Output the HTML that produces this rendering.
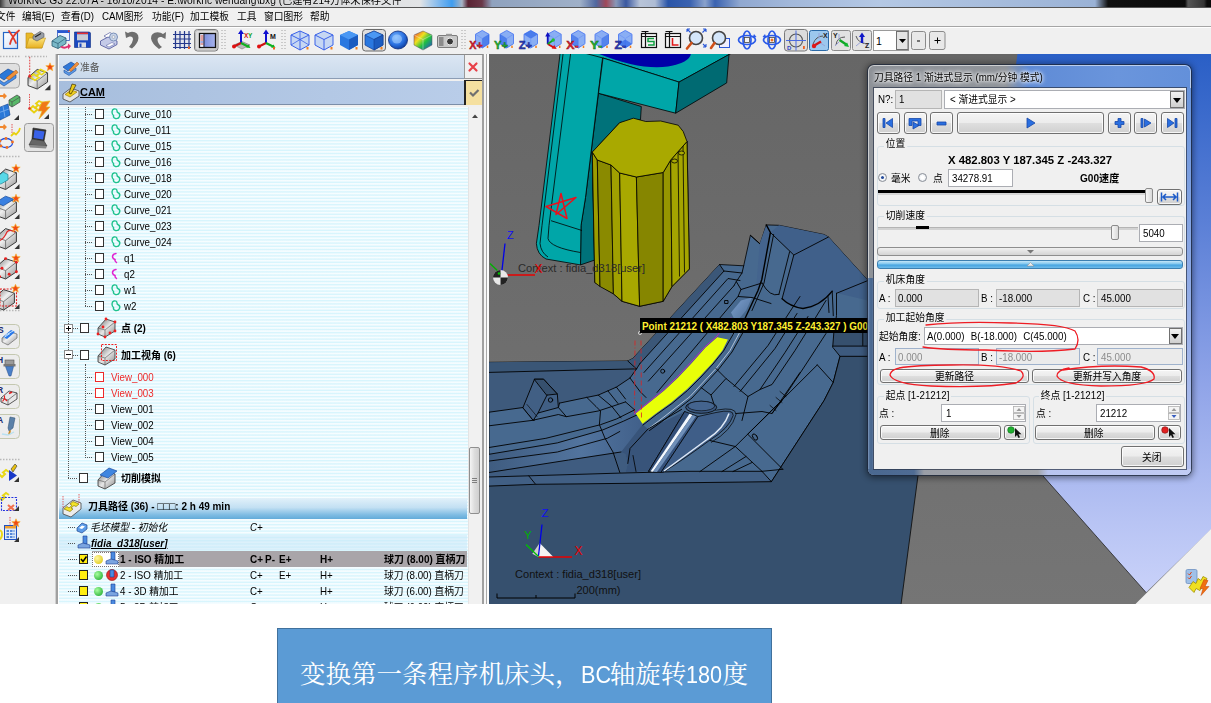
<!DOCTYPE html>
<html lang="zh"><head><meta charset="utf-8"><title>WorkNC</title>
<style>
html,body{margin:0;padding:0;background:#fff;}
body{width:1211px;height:703px;position:relative;overflow:hidden;font-family:"Liberation Sans","Noto Sans CJK SC",sans-serif;font-size:12px;color:#000;}
.a{position:absolute;}
.t{position:absolute;white-space:nowrap;transform-origin:0 50%;transform:scaleX(.93);line-height:14px;font-size:10.5px;}
.b{font-weight:bold;transform:scaleX(.95);}
.i{font-style:italic;}
#ui{position:absolute;left:0;top:0;width:1211px;height:604px;background:#f0f0f0;overflow:hidden;}
#title{position:absolute;left:0;top:0;width:1211px;height:8px;overflow:hidden;}
#menu{position:absolute;left:0;top:8px;width:1211px;height:18px;background:#f0f0f0;}
#menu .t{top:1px;font-size:10.5px;}
#tb{position:absolute;left:0;top:26px;width:1211px;height:28px;background:#f0f0f0;border-top:1px solid #a5a5a5;box-shadow:inset 0 1px 0 #fff;}
#left{position:absolute;left:0;top:54px;width:55px;height:550px;background:#f0f0f0;}
#tree{position:absolute;left:56px;top:54px;width:428px;height:550px;background:#f0f0f0;}
#cap{position:absolute;left:277px;top:628px;width:495px;height:80px;background:#5b9bd5;border:1px solid #41719c;box-sizing:border-box;}
</style></head><body>
<div id="ui">
<div id="title" style="background:linear-gradient(90deg,#3a3a3a 0,#9a9a9a 6px,#c4c4c4 30px,#d4d4d4 200px,#e2e4e6 420px,#7ab6ee 440px,#3f9df0 452px,#a8b4c4 462px,#5a2434 468px,#6a3848 482px,#8fa2be 492px,#9fb0c8 580px,#5068a0 596px,#a04858 606px,#8898b8 616px,#3a58a0 626px,#b8c4d8 640px,#aebcd4 655px,#2a55a8 668px,#3a62b0 690px,#8aa2cc 705px,#3a62b0 715px,#90a8d0 740px,#a2b8da 790px,#b4c8e4 880px,#a6bcdc 1000px,#9ab2d6 1095px,#101010 1108px,#0a0a0a 1185px,#555 1188px,#333 1204px,#0a0a0a 1207px)">
<span class="t" style="left:8px;top:-7.5px;font-size:10.5px;transform:scaleX(.975);color:#000;text-shadow:0 0 2px rgba(255,255,255,.6);filter:blur(.4px)">WorkNC G3 22.07A - 16/10/2014 - E:\worknc wendang\bxg (已建有214方体未保存文件</span>
<div class="a" style="left:0;top:6.500px;width:1211px;height:1.500px;background:#555"></div>
</div>
<div id="menu">
<span class="t" style="left:-4px">文件</span>
<span class="t" style="left:22px">编辑(E)</span>
<span class="t" style="left:61px">查看(D)</span>
<span class="t" style="left:102px">CAM图形</span>
<span class="t" style="left:152px">功能(F)</span>
<span class="t" style="left:190px">加工模板</span>
<span class="t" style="left:237px">工具</span>
<span class="t" style="left:264px">窗口图形</span>
<span class="t" style="left:310px">帮助</span>
</div>
<div id="tb"></div>
<svg class="a" style="left:0;top:27px" width="960" height="27" viewBox="0 27 960 27">
<defs>
<linearGradient id="tdoc" x1="0" y1="0" x2="1" y2="1"><stop offset="0" stop-color="#fff"/><stop offset="1" stop-color="#cfe0f8"/></linearGradient>
<linearGradient id="tfold" x1="0" y1="0" x2="0" y2="1"><stop offset="0" stop-color="#fbe480"/><stop offset="1" stop-color="#e8b020"/></linearGradient>
<linearGradient id="tcube" x1="0" y1="0" x2="1" y2="1"><stop offset="0" stop-color="#4a9af0"/><stop offset="1" stop-color="#1c62c8"/></linearGradient>
<linearGradient id="tpan" x1="0" y1="0" x2="1" y2="0"><stop offset="0" stop-color="#6a80d8"/><stop offset="1" stop-color="#a8b4ec"/></linearGradient>
<radialGradient id="tsph" cx=".4" cy=".35" r=".7"><stop offset="0" stop-color="#7ab8ff"/><stop offset=".6" stop-color="#2a70e0"/><stop offset="1" stop-color="#0c3a98"/></radialGradient>
<linearGradient id="trb" x1="0" y1="0" x2="1" y2="1"><stop offset="0" stop-color="#f03030"/><stop offset=".35" stop-color="#f0e020"/><stop offset=".6" stop-color="#20c040"/><stop offset="1" stop-color="#2040e0"/></linearGradient>
<g id="wc"><path d="M11,2 L20,6 L20,16 L11,21 L2,16 L2,6 Z" fill="rgba(120,170,250,.35)" stroke="#3a62e8" stroke-width="1"/><path d="M2,6 L11,10.500 L20,6 M11,10.500 V21" fill="none" stroke="#3a62e8" stroke-width="1"/></g>
<g id="vc"><path d="M11,1.500 L20,5.500 L20,15.500 L11,20 L2,15.500 L2,5.500 Z" fill="rgba(70,130,245,.6)" stroke="#3a6af0" stroke-width=".9"/><path d="M2,5.500 L11,10 L20,5.500 M11,10 V20" fill="none" stroke="#6a92f4" stroke-width=".8"/><path d="M11,1.500 V10 M2,15.500 L11,10 L20,15.500" fill="none" stroke="#8ab0f8" stroke-width=".5"/><rect x="17" y="17.500" width="2" height="2.500" fill="#f08020"/></g>
<g id="sep"><path d="M1,2 v1 M1,5 v1 M1,8 v1 M1,11 v1 M1,14 v1 M1,17 v1 M1,20 v1 M4,2 v1 M4,5 v1 M4,8 v1 M4,11 v1 M4,14 v1 M4,17 v1 M4,20 v1" stroke="#b4b4b4" stroke-width="1.300"/></g>
</defs>
<!-- 1 new doc with red X -->
<rect x="3.500" y="32.500" width="14" height="16" fill="url(#tdoc)" stroke="#2565c5" stroke-width="1.200"/>
<path d="M9,31 Q13,36 16,43 M19,30.500 Q12,36 10,44" fill="none" stroke="#e03a2a" stroke-width="1.800" stroke-linecap="round"/>
<!-- 2 folder -->
<path d="M26,33 h6 l2,2 h8 v13 h-16 z" fill="#e8b828" stroke="#b88810" stroke-width=".6"/>
<path d="M26,48 L29,38 H45.500 L42,48 Z" fill="url(#tfold)" stroke="#c09010" stroke-width=".6"/>
<path d="M33,36 L40,31.500 L44,33.500 L44,37 L37,41 L33,39 Z" fill="#9aa0a8" stroke="#50545a" stroke-width=".6"/><path d="M35,37 l6,-3.500" stroke="#222" stroke-width="1.200"/>
<!-- 3 teal box w/ window -->
<rect x="57.500" y="30.500" width="12" height="10" fill="#e8f0ff" stroke="#3058c0" stroke-width=".8"/><rect x="57.500" y="30.500" width="12" height="2.500" fill="#2858d0"/><rect x="68" y="30.500" width="1.500" height="1.500" fill="#e03030"/>
<path d="M52,41 L60,35.500 L66,38 L66,43.500 L58,48.500 L52,46 Z" fill="#7ab8c8" stroke="#2a5a70" stroke-width=".8"/><path d="M52,41 L58,43.500 L66,38 M58,43.500 V48.500" fill="none" stroke="#2a5a70" stroke-width=".7"/>
<path d="M60,47 Q64,50 68,47.500 v2 l3,-3.500 l-3,-2.500 v2 Q65,47.500 62,46 Z" fill="#e03070"/>
<!-- 4 floppy -->
<path d="M74.500,32 h15 l1,1 v14.500 h-16 z" fill="#1a48c0" stroke="#0a2a80" stroke-width=".6"/><rect x="77" y="32.500" width="11" height="1.800" fill="#e83030"/><rect x="77" y="34.300" width="11" height="6" fill="#c8ccd4"/><rect x="78" y="42.500" width="8" height="5" fill="#d8dce4"/><rect x="79.500" y="43.500" width="2" height="3.500" fill="#1a48c0"/>
<!-- 5 printer -->
<path d="M104,36 L110,32.500 L114,35 L108,38.500 Z" fill="#fff" stroke="#5a62a0" stroke-width=".7"/>
<path d="M100.500,41 L108,37 L117,41 L117,44.500 L109,49 L100.500,45 Z" fill="#c4cae8" stroke="#4a5298" stroke-width=".8"/><path d="M106,45.500 L112,42.500 L115,44 L109,47 Z" fill="#fff" stroke="#4a5298" stroke-width=".5"/>
<circle cx="113.500" cy="37" r="4" fill="#c8d4e8" stroke="#7a90b8" stroke-width="1"/><circle cx="113.500" cy="37" r="1.500" fill="#f0f0f0" stroke="#8a98b0" stroke-width=".6"/>
<!-- 6 undo / 7 redo -->
<path d="M125,31.500 L126,38 L129.500,36.500 Q133,36 133,39.500 Q132.500,43.500 129,47 L132,48.500 Q138,43.500 138.500,38 Q138.500,32 132,31.800 Q129,32 128,33 Z" fill="#6e6e6e"/>
<path d="M166,32 L165.500,39 L161.500,37 Q157.500,36.500 157.500,40 Q158,44 162,47 L159,49 Q152,44 151,38.500 Q151,32.500 157.500,32.300 Q161,32.500 163,34 Z" fill="#6e6e6e"/>
<!-- 8 grid -->
<rect x="174" y="32" width="16" height="16" fill="#e4e6ee"/>
<path d="M173,34.500 h18 M173,39 h18 M173,43.500 h18 M173,47.500 h18 M175.500,31 v18 M180,31 v18 M184.500,31 v18 M189,31 v18" stroke="#24388c" stroke-width="1.200"/><rect x="188" y="46.500" width="1.800" height="2.500" fill="#f06020"/>
<!-- 9 pressed panel -->
<rect x="194.500" y="29.500" width="23.500" height="21.500" rx="3" fill="#dcdcdc" stroke="#7c7c7c" stroke-width="1"/><rect x="195.500" y="30.500" width="21.500" height="19.500" rx="2" fill="none" stroke="#bcbcbc" stroke-width="1"/>
<rect x="199.500" y="33.500" width="16" height="14" fill="url(#tpan)" stroke="#111" stroke-width="1.300"/><rect x="200.200" y="34.200" width="3.300" height="12.600" fill="#f4f4f4"/><path d="M200.500,36 h3 M200.500,38 h3 M200.500,40 h3 M200.500,44 h3" stroke="#c02020" stroke-width=".8"/><path d="M200.500,42 h3" stroke="#2040c0" stroke-width=".8"/><path d="M204,34 v13" stroke="#111" stroke-width=".8"/>
<use href="#sep" x="221" y="28"/>
<!-- 11 axes XY -->
<g transform="translate(231,29)"><path d="M3,16 L11,12.500 L19,16 L11,20 Z" fill="#b8b8b8" stroke="#777" stroke-width=".6"/><path d="M10,14 V4" stroke="#1010d0" stroke-width="2"/><path d="M10,0.500 L7,5 H13 Z" fill="#1010d0"/><path d="M10,14 L3,17.500" stroke="#d01010" stroke-width="2"/><circle cx="3" cy="17.500" r="2" fill="#e01010"/><path d="M10,14 L17,17.500" stroke="#10b020" stroke-width="2"/><path d="M19.500,19 L15,18.500 L17.500,15.500 Z" fill="#10b020"/><text x="13" y="9" font-family="Liberation Sans,sans-serif" font-weight="bold" font-size="6.500" fill="#d01010">X</text><text x="17" y="9" font-family="Liberation Sans,sans-serif" font-weight="bold" font-size="6.500" fill="#10a020">Y</text></g>
<g transform="translate(256,29)"><path d="M10,14 V4" stroke="#1010d0" stroke-width="2"/><path d="M10,0.500 L7,5 H13 Z" fill="#1010d0"/><path d="M10,14 L3,17.500" stroke="#d01010" stroke-width="2"/><circle cx="3" cy="17.500" r="2" fill="#e01010"/><path d="M10,14 L17,17.500" stroke="#10b020" stroke-width="2"/><path d="M19.500,19 L15,18.500 L17.500,15.500 Z" fill="#10b020"/><text x="14" y="9.500" font-family="Liberation Sans,sans-serif" font-weight="bold" font-size="7" fill="#111">M</text><rect x="17" y="18" width="2" height="2.500" fill="#f06020"/></g>
<use href="#sep" x="281" y="28"/>
<!-- cubes -->
<g transform="translate(289,29)"><use href="#wc"/><path d="M2,16 L11,10.500 L20,16 M11,2 V10.500" fill="none" stroke="#3a62e8" stroke-width=".8"/><rect x="17.500" y="18" width="2" height="2.500" fill="#f08020"/></g>
<g transform="translate(313,29)"><use href="#wc"/><rect x="17.500" y="18" width="2" height="2.500" fill="#f08020"/></g>
<g transform="translate(338,29)"><path d="M11,2 L20,6 L20,16 L11,21 L2,16 L2,6 Z" fill="#2a78e0"/><path d="M11,2 L20,6 L11,10.500 L2,6 Z" fill="#4a98f4"/><path d="M11,10.500 L20,6 L20,16 L11,21 Z" fill="#1c5cc0"/><rect x="17.500" y="18" width="2" height="2.500" fill="#f08020"/></g>
<rect x="362.500" y="29.500" width="23" height="21.500" rx="3" fill="#dedede" stroke="#6a6a6a" stroke-width="1"/>
<g transform="translate(363,29)"><path d="M11,2 L20,6 L20,16 L11,21 L2,16 L2,6 Z" fill="#2a78e0" stroke="#123c90" stroke-width=".7"/><path d="M11,2 L20,6 L11,10.500 L2,6 Z" fill="#4a98f4" stroke="#123c90" stroke-width=".6"/><path d="M11,10.500 L20,6 L20,16 L11,21 Z" fill="#1c5cc0" stroke="#123c90" stroke-width=".6"/><rect x="17.500" y="18" width="2" height="2.500" fill="#f08020"/></g>
<ellipse cx="398" cy="40" rx="9.500" ry="9" fill="url(#tsph)" stroke="#0c2a78" stroke-width=".8"/><ellipse cx="397" cy="39" rx="5" ry="4.500" fill="rgba(170,210,255,.55)"/>
<g transform="translate(412,29)"><path d="M11,2 L20,6 L20,16 L11,21 L2,16 L2,6 Z" fill="url(#trb)" stroke="#555" stroke-width=".5"/><path d="M2,6 L11,10.500 L20,6 M11,10.500 V21" fill="none" stroke="rgba(255,255,255,.5)" stroke-width=".7"/></g>
<g transform="translate(437,33)"><rect x=".5" y="2.500" width="20" height="12" rx="1.500" fill="#c8c8c8" stroke="#707070" stroke-width=".9"/><rect x="2" y="4" width="4.500" height="9" fill="#8c8c8c"/><circle cx="13" cy="8.500" r="3.500" fill="#3a3a3a" stroke="#eee" stroke-width="1"/><rect x="9" y=".8" width="6" height="2" fill="#9a9a9a"/></g>
<use href="#sep" x="461" y="28"/>
<!-- view cubes -->
<g font-family="Liberation Sans,sans-serif" font-weight="bold" font-size="10" stroke-width=".4">
<g transform="translate(474.0,29) scale(.75,.95)"><use href="#vc"/><path d="M11,10 L20,5.500 L20,15.500 L11,20 Z" fill="rgba(30,90,230,.55)"/></g>
<text x="469.3" y="49" fill="#e02030" stroke="#801018" textLength="13.5" lengthAdjust="spacingAndGlyphs">X+</text>
<g transform="translate(498.5,29) scale(.75,.95)"><use href="#vc"/><path d="M11,10 L2,5.500 L2,15.500 L11,20 Z" fill="rgba(30,90,230,.55)"/></g>
<text x="494" y="49" fill="#20b830" stroke="#106018" textLength="14" lengthAdjust="spacingAndGlyphs">Y+</text>
<g transform="translate(522.5,29) scale(.75,.95)"><use href="#vc"/><path d="M11,1.500 L20,5.500 L11,10 L2,5.500 Z" fill="rgba(30,90,230,.6)"/></g>
<text x="518.8" y="49" fill="#3040c0" stroke="#101870" textLength="13.2" lengthAdjust="spacingAndGlyphs">Z+</text>
<g transform="translate(546.2,29) scale(.75,.95)"><use href="#vc"/></g>
<g transform="translate(543.7,29)"><path d="M4,6 V15" stroke="#1010c0" stroke-width="1.800"/><path d="M4,3 L1.500,7.500 H6.500 Z" fill="#1010c0" stroke="none"/><path d="M4,15 L10,18.500" stroke="#d01010" stroke-width="2"/><path d="M13,20 L8,19.500 L10.500,16 Z" fill="#e01010" stroke="none"/><path d="M4,15 L9,11.500" stroke="#10a020" stroke-width="1.600"/><circle cx="9.500" cy="11" r="1.700" fill="#20c030" stroke="none"/></g>
<g transform="translate(570.0,29) scale(.75,.95)"><use href="#vc"/><path d="M2,5.500 L11,10 L11,20 L2,15.500 Z" fill="rgba(30,90,230,.5)"/></g>
<text x="566.3" y="49" fill="#e02030" stroke="#801018" textLength="12.4" lengthAdjust="spacingAndGlyphs">X-</text>
<g transform="translate(593.5,29) scale(.75,.95)"><use href="#vc"/><path d="M11,10 L20,5.500 L20,15.500 L11,20 Z" fill="rgba(30,90,230,.5)"/></g>
<text x="590" y="49" fill="#20b830" stroke="#106018" textLength="12.4" lengthAdjust="spacingAndGlyphs">Y-</text>
<g transform="translate(617.0,29) scale(.75,.95)"><use href="#vc"/><path d="M2,15.500 L11,11 L20,15.500 L11,20 Z" fill="rgba(30,90,230,.6)"/></g>
<text x="614.5" y="49" fill="#3040c0" stroke="#101870" textLength="11.5" lengthAdjust="spacingAndGlyphs">Z-</text>
</g>
<!-- S / L tables -->
<g transform="translate(640,30)"><rect x="1.500" y="3.500" width="15" height="14" fill="#f4f4f4" stroke="#111" stroke-width="1.200"/><path d="M1.500,6.500 h15 M5.500,1 v16.500 M1.500,1.500 h7" stroke="#111" stroke-width="1.200" fill="none"/><path d="M14,8.500 h-6 v3 h6 v3.500 h-6" fill="none" stroke="#10a040" stroke-width="1.500"/></g>
<g transform="translate(664,30)"><rect x="1.500" y="3.500" width="15" height="14" fill="#f4f4f4" stroke="#111" stroke-width="1.200"/><path d="M1.500,6.500 h15 M5.500,1 v16.500 M1.500,1.500 h7" stroke="#111" stroke-width="1.200" fill="none"/><path d="M8.500,8 v7 h6" fill="none" stroke="#e01818" stroke-width="1.600"/></g>
<!-- zoom fit -->
<g transform="translate(686,28)"><circle cx="10" cy="10" r="6.500" fill="#d4e6fa" stroke="#444" stroke-width="1.600"/><path d="M5.500,15 L1,20.500" stroke="#d05018" stroke-width="2.600" stroke-linecap="round"/><path d="M1,1 l3.500,3.500 M1,1 h3 M1,1 v3 M20,1 l-3.500,3.500 M20,1 h-3 M20,1 v3 M20,19 l-3,-3 M20,19 h-3 M20,19 v-3" stroke="#2a58d8" stroke-width="1.100" fill="none"/></g>
<g transform="translate(710,29)"><rect x="9.500" y="9.500" width="10" height="9" fill="#eef" stroke="#2a58d8" stroke-width="1"/><circle cx="9" cy="9" r="6.500" fill="#d4e6fa" stroke="#444" stroke-width="1.600"/><path d="M4.500,14 L1,19" stroke="#d05018" stroke-width="2.600" stroke-linecap="round"/></g>
<!-- rotate icons -->
<g transform="translate(737,29)" fill="none" stroke="#2a5ae8" stroke-width="1.700"><ellipse cx="10" cy="11" rx="8.500" ry="4.500"/><ellipse cx="10" cy="11" rx="4" ry="9"/><rect x="7.500" y="8.500" width="5" height="5" fill="#f4f4f4" stroke="#444" stroke-width=".8"/><path d="M17,5 l2.500,3 l-4,.8 z" fill="#2a5ae8" stroke="none"/></g>
<g transform="translate(762,29)" fill="none" stroke="#2a5ae8" stroke-width="1.700"><ellipse cx="10" cy="11" rx="8.500" ry="4.500"/><ellipse cx="10" cy="11" rx="4" ry="9"/><rect x="7.500" y="8.500" width="5" height="5" fill="#f4f4f4" stroke="#444" stroke-width=".8"/><circle cx="10" cy="11" r="1.500" fill="#f07020" stroke="none"/><path d="M3,5 l-2.500,3 l4,.8 z" fill="#2a5ae8" stroke="none"/></g>
<!-- pressed crosshair -->
<rect x="784.500" y="29.500" width="23" height="21.500" rx="3" fill="#dcdcdc" stroke="#7a7a7a" stroke-width="1"/>
<circle cx="796" cy="40.500" r="6.500" fill="none" stroke="#555" stroke-width="1.100"/><path d="M796,30.500 v20 M786,40.500 h20" stroke="#4a6ae0" stroke-width="1"/><text x="787" y="49.500" font-family="Liberation Sans,sans-serif" font-size="6" font-weight="bold" fill="#3040c0">D</text><rect x="803" y="46" width="1.800" height="3" fill="#f06020"/>
<rect x="809.500" y="30.500" width="19" height="20" rx="2" fill="#9cc8ee" stroke="#2a6aa8" stroke-width="1"/>
<g transform="translate(810,31)"><path d="M3,13 Q6,5 13,5" fill="none" stroke="#555" stroke-width="1"/><path d="M9,8 V2 M9,11 L15,15" stroke="#9aa4d8" stroke-width="1"/><path d="M3.500,15 L11,10.500" stroke="#d01818" stroke-width="2.400"/><circle cx="4" cy="15" r="2.200" fill="#e01818"/><text x="13" y="7" font-family="Liberation Sans,sans-serif" font-size="7" font-weight="bold" fill="#222">X</text></g>
<rect x="831.500" y="30.500" width="19" height="20" rx="2" fill="#e2e2e2" stroke="#8a8a8a" stroke-width="1"/>
<g transform="translate(832,31)"><path d="M4,14 Q5,6 13,6" fill="none" stroke="#555" stroke-width="1"/><path d="M7,9 V3 M7,11 L3,15" stroke="#9aa4d8" stroke-width="1"/><path d="M7.500,9 L15,14" stroke="#10a828" stroke-width="2.400"/><path d="M17,16 L12,15 L15,11.500 Z" fill="#10b830"/><text x="1" y="7" font-family="Liberation Sans,sans-serif" font-size="7" font-weight="bold" fill="#222">Y</text></g>
<rect x="852.500" y="30.500" width="19" height="20" rx="2" fill="#e2e2e2" stroke="#8a8a8a" stroke-width="1"/>
<g transform="translate(853,31)"><path d="M3,5 Q5,12 14,13" fill="none" stroke="#555" stroke-width="1"/><path d="M9,10 L3,15 M9,10 L15,15" stroke="#9aa4d8" stroke-width="1"/><path d="M9,12 V5" stroke="#1018c8" stroke-width="2.400"/><path d="M9,1.500 L6,6 H12 Z" fill="#1018c8"/><text x="12" y="17" font-family="Liberation Sans,sans-serif" font-size="7" font-weight="bold" fill="#222">Z</text></g>
<!-- combo + buttons -->
<rect x="873.500" y="30.500" width="35" height="20" fill="#fff" stroke="#9a9a9a" stroke-width="1"/>
<text x="876" y="44.500" font-family="Liberation Sans,sans-serif" font-size="10.500" fill="#000">1</text>
<rect x="896.500" y="31.500" width="11.500" height="18" fill="#e4e4e4" stroke="#707070" stroke-width="1"/><path d="M899,39 h7 l-3.500,4 z" fill="#000"/>
<rect x="911.500" y="31.500" width="14" height="18" rx="2" fill="#e8e8e8" stroke="#8a8a8a" stroke-width="1"/><path d="M917,41 h3" stroke="#000" stroke-width="1"/>
<rect x="929.500" y="31.500" width="15.500" height="18" rx="2" fill="#e8e8e8" stroke="#8a8a8a" stroke-width="1"/><path d="M934.500,40.500 h6 M937.500,37.500 v6" stroke="#000" stroke-width="1"/>
</svg>
<svg class="a" style="left:0;top:54px" width="56" height="550" viewBox="0 54 56 550">
<defs>
<linearGradient id="lblk" x1="0" y1="0" x2="1" y2="1"><stop offset="0" stop-color="#707070"/><stop offset=".45" stop-color="#efefef"/><stop offset="1" stop-color="#8c8c8c"/></linearGradient>
<g id="lb"><path d="M0,10 L8,3 L17,6 L17,14 L8,20 L0,17 Z" fill="url(#lblk)" stroke="#333" stroke-width=".8"/><path d="M0,10 L8,13 L17,6 M8,13 V20" fill="none" stroke="#555" stroke-width=".6"/></g>
<g id="star"><path d="M0,-4.200 L1.200,-1.400 L4.200,-1.300 L1.900,.6 L2.700,3.700 L0,2 L-2.700,3.700 L-1.900,.6 L-4.200,-1.300 L-1.200,-1.400 Z" fill="#f04a14" stroke="#f8b838" stroke-width=".7"/></g>
<g id="tri"><path d="M0,5 L5,5 L5,0 Z" fill="#333"/></g>
</defs>
<rect x="0" y="54" width="55" height="550" fill="#f0f0f0"/>
<rect x="55" y="54" width="1" height="550" fill="#d0d0d0"/>
<path d="M0,56.500 h20 M25,56.500 h22 M0,156.500 h20 M0,310.500 h20 M0,459.500 h20" stroke="#b8b8b8" stroke-width="1.300" stroke-dasharray="1.500 1.500"/>
<!-- row1 left pressed -->
<rect x="-4" y="63.500" width="23.500" height="24.500" rx="4" fill="#e0e0e0" stroke="#a8a8a8" stroke-width="1"/>
<path d="M-2,76 L8,69 L14,72 L4,80 Z" fill="#2a78d8" stroke="#184a98" stroke-width=".7"/><path d="M-2,79 L4,83 L16,75 L16,78 L4,86 L-2,82 Z" fill="#4a90e8" stroke="#184a98" stroke-width=".6"/><path d="M6,78 L16,70 L18,72.500 L9,80 Z" fill="#f09038" stroke="#a05010" stroke-width=".5"/>
<!-- row1 right -->
<g transform="translate(28,66) scale(1.15)"><use href="#lb"/><path d="M2,9.500 L5,7 L7,8.500 L10,6 L8,5 L11,3 L15,5 L12,7.500 L10,6.500 L7.500,9 L9.500,10 L6,12.500 Z" fill="none" stroke="#e8d818" stroke-width="1.400"/><path d="M1.500,-8 v16" stroke="#e03030" stroke-width=".8" stroke-dasharray="1.500 1"/><circle cx="1.500" cy="9" r="1.300" fill="#e03030"/><use href="#tri" x="14.500" y="16"/></g><use href="#star" x="50" y="67"/>
<!-- row2 left -->
<path d="M0,95 l3,0 l1,-2 l3,3 l-3,3 l-1,-2 l-3,0 z" fill="#f08830"/>
<path d="M9,100 L17,95 L20,97 L20,102 L12,107 L9,105 Z" fill="#58b868" stroke="#444" stroke-width=".7"/><path d="M9,100 L12,102 L20,97 M12,102 v5" fill="none" stroke="#444" stroke-width=".6"/>
<path d="M-2,108 L8,104 L10,115 L0,120 Z" fill="#2a78d8" stroke="#184a98" stroke-width=".7"/><path d="M3,106 l2,11 M-2,113 l11,-4" stroke="#8ab8f0" stroke-width=".7"/><use href="#tri" x="14" y="115"/>
<!-- row2 right -->
<g transform="translate(28,97)"><path d="M2,12 L5,9 L7,11 L10,8 L8,6.500 L11,4 L15,6 L12,9 L10,8 L7.500,11 L9.500,12.500 L6,15.500 Z" fill="none" stroke="#e8d010" stroke-width="1.800"/><path d="M1.500,-3 v14" stroke="#e03030" stroke-width=".8" stroke-dasharray="1.500 1"/><circle cx="1.500" cy="11.500" r="1.300" fill="#e03030"/><path d="M14,5 L22,4 L18,10 L22,10 L11,22 L14,14 L10,14 Z" fill="#f07818" stroke="#e8c020" stroke-width=".7"/><use href="#tri" x="16" y="17"/></g>
<!-- row3 left -->
<path d="M0,126 l3,0 l1,-2 l3,3 l-3,3 l-1,-2 l-3,0 z" fill="#f08830"/>
<path d="M12,124 v10" stroke="#e03030" stroke-width=".8" stroke-dasharray="1.500 1"/><path d="M11,136 L14,133 L16,134.500 L19,131 L20,128" fill="none" stroke="#e8d010" stroke-width="1.800"/>
<ellipse cx="6" cy="143" rx="6.500" ry="4.500" fill="none" stroke="#2050e0" stroke-width="1.300"/><g fill="#f07020"><circle cx="0" cy="141" r="1.400"/><circle cx="6" cy="138.500" r="1.400"/><circle cx="12.500" cy="142" r="1.400"/><circle cx="7" cy="147.500" r="1.400"/><circle cx="1" cy="146" r="1.400"/></g>
<!-- row3 right pressed laptop -->
<rect x="24.500" y="123.500" width="29" height="28" rx="3" fill="#e4e4e4" stroke="#9a9a9a" stroke-width="1"/>
<path d="M33,128 L46,130 L44,141 L32,139 Z" fill="#333" stroke="#222" stroke-width=".6"/><path d="M34.500,130 L44.500,131.500 L43,139.500 L33.500,138 Z" fill="#3a62e8"/><path d="M32,139 L44,141 L47,146 L29,145 Z" fill="#666" stroke="#333" stroke-width=".6"/><path d="M29,145 L47,146 L46,148.500 L30,147.500 Z" fill="#888"/>
<!-- column icons -->
<g transform="translate(-4,165.500) scale(1.2)"><use href="#lb"/><path d="M0,10 L6,5.500 L10,7.500 L10,12 L4,15.500 L0,13.500 Z" fill="#58d8e8" stroke="#208090" stroke-width=".6"/></g>
<g transform="translate(-4,195) scale(1.2)"><use href="#lb"/><path d="M0,6 L8,1 L15,3.500 L6,9 Z" fill="#3a80e0" stroke="#184a98" stroke-width=".6"/></g>
<g transform="translate(-4,225) scale(1.2)"><use href="#lb"/><path d="M0,14 Q6,13 9,6 Q11,3 16,6" fill="none" stroke="#e02828" stroke-width="1"/></g>
<g transform="translate(-4,255) scale(1.2)"><use href="#lb"/><g fill="#e82020"><circle cx="8" cy="3" r="1.200"/><circle cx="17" cy="6" r="1.200"/><circle cx="5" cy="11" r="1.200"/><circle cx="11" cy="16" r="1.200"/><circle cx="3" cy="18" r="1.200"/><circle cx="17" cy="14" r="1.200"/></g></g>
<g transform="translate(-6,286) scale(1.2)"><use href="#lb"/></g><rect x="0" y="289" width="16.500" height="17" fill="none" stroke="#e82020" stroke-width="1.100" stroke-dasharray="2 1.300"/>
<use href="#star" x="16" y="168.500"/><use href="#star" x="16" y="198.500"/><use href="#star" x="15.500" y="228"/><use href="#star" x="16" y="258"/><use href="#star" x="15.500" y="288.500"/>
<use href="#tri" x="14.500" y="184"/><use href="#tri" x="14.500" y="214"/><use href="#tri" x="14.500" y="244"/><use href="#tri" x="14.500" y="274"/><use href="#tri" x="14.500" y="304"/>
<!-- S H R A -->
<g font-family="Liberation Sans,sans-serif" font-weight="bold" font-size="8.500" fill="#1a2a70">
<g transform="translate(0,324)"><rect x="-4" y=".5" width="23.500" height="24" rx="4" fill="#ececec" stroke="#c4c8b0" stroke-width="1"/><path d="M2,14 L10,8 L17,10 L17,14 L8,21 L2,18 Z" fill="url(#lblk)" stroke="#555" stroke-width=".6"/><path d="M3,13 L11,6 L15,8 L7,15 Z" fill="#2a78e8"/><path d="M5,11.500 L13,7 M4,13.500 L10,9.500" stroke="#bfe0ff" stroke-width="1"/><text x="-2" y="9">S</text></g>
<g transform="translate(0,354)"><rect x="-4" y=".5" width="23.500" height="24" rx="4" fill="#ececec" stroke="#c4c8b0" stroke-width="1"/><rect x="5" y="6" width="9" height="5" fill="#9a9a9a" stroke="#555" stroke-width=".6"/><rect x="3.500" y="10" width="12" height="2.500" fill="#777"/><path d="M5.500,12.500 h8 l-2.500,9.500 h-2 z" fill="#4a80c8" stroke="#234a88" stroke-width=".5"/><text x="-3" y="9">H</text></g>
<g transform="translate(0,384)"><rect x="-4" y=".5" width="23.500" height="24" rx="4" fill="#ececec" stroke="#c4c8b0" stroke-width="1"/><path d="M1,14 L9,7 L17,9 L17,15 L8,21 L1,18 Z" fill="#e8e8e8" stroke="#333" stroke-width=".8"/><path d="M1,14 L8,16 L17,9 M8,16 v5" fill="none" stroke="#333" stroke-width=".6"/><path d="M9,9.500 l3,-1.500" stroke="#e02020" stroke-width="1.800"/><path d="M4.500,14.500 l-2,3 M4.500,14.500 l2.500,2.500 M4.500,14.500 v-3" stroke="#e02020" stroke-width="1.100"/><text x="-3" y="9">R</text></g>
<g transform="translate(0,414)"><rect x="-4" y=".5" width="23.500" height="24" rx="4" fill="#ececec" stroke="#c4c8b0" stroke-width="1"/><path d="M10,3 L15,4 L13,14 L9,17 L8,14 Z" fill="#5a80a8" stroke="#2a4a70" stroke-width=".5"/><path d="M9,17 L8,21 L10,21 L11,16 Z" fill="#c88820"/><path d="M2,20 L8,21 L14,18" stroke="#b8e0f0" stroke-width="1.300" fill="none"/><text x="-3" y="9">A</text></g>
</g>
<!-- bottom 3 -->
<g transform="translate(0,466)"><path d="M-3,12 L0,9 L2,11 L5,8 L3,6.500 L6,4 L9,6" fill="none" stroke="#e8d818" stroke-width="2"/><path d="M11,3 L15,-2 L17,0 L13,6 Z" fill="#e8c010" stroke="#333" stroke-width=".6"/><path d="M9,4 L17,9.500 L9,15 Z" fill="#1838c8"/><use href="#tri" x="14" y="11"/></g>
<g transform="translate(0,494)"><path d="M-3,7 L0,4 L2,6 L5,3 L3,1.500 L6,-1 L9,1" fill="none" stroke="#e8d818" stroke-width="2"/><rect x="1.500" y="3.500" width="15" height="13" fill="none" stroke="#2030e0" stroke-width="1.100" stroke-dasharray="2 1.300"/><path d="M8,11 l6,5 M14,11 l-6,5" stroke="#f07050" stroke-width="2.200"/><use href="#tri" x="14" y="12"/></g>
<g transform="translate(0,522)"><path d="M-3,9 Q2,7 2,12 Q2,17 -2,18" fill="none" stroke="#e8d818" stroke-width="2"/><path d="M10,-5 v8" stroke="#e03030" stroke-width=".8" stroke-dasharray="1.500 1"/><rect x="4.500" y="3.500" width="12" height="14" fill="#dce8f8" stroke="#2050c0" stroke-width="1"/><rect x="5" y="4" width="11" height="2.500" fill="#f0a030"/><path d="M6.500,9 h8 M6.500,12 h8 M6.500,15 h8" stroke="#2a68d0" stroke-width="1.600" stroke-dasharray="2.500 1"/><use href="#star" x="16" y="1"/><use href="#tri" x="14" y="15"/></g>
</svg>
<style>
#tr .t{font-size:10.5px}
.cb{position:absolute;width:9px;height:10px;box-sizing:border-box;border:1.3px solid #333;background:#fff}
.hd{position:absolute;height:1px;border-top:1px dotted #555;}
.vd{position:absolute;width:1px;border-left:1px dotted #555;}
</style>
<div id="tr">
<div class="a" style="left:56px;top:54px;width:428px;height:550px;background:#f0f0f0"></div>
<div class="a" style="left:56px;top:54px;width:2px;height:550px;background:#a0a0a0;border-right:1px solid #fff"></div>
<div class="a" style="left:58.500px;top:55px;width:405px;height:24px;background:linear-gradient(180deg,#dbe6f3,#c9d9eb);border-bottom:1px solid #8c9db5;box-sizing:border-box"></div>
<div class="a" style="left:464px;top:55px;width:18px;height:24px;background:#f0f0f0;border-left:1px solid #999;border-bottom:1px solid #999;box-sizing:border-box"></div>
<svg class="a" style="left:466px;top:60px" width="14" height="14"><path d="M3.500,3.500 L10.500,10.500 M10.500,3.500 L3.500,10.500" stroke="#e84048" stroke-width="2.200" stroke-linecap="round"/></svg>
<div class="a" style="left:58.500px;top:80.500px;width:405px;height:24px;background:linear-gradient(90deg,#a7bedd,#b9cde9);border-bottom:1px solid #7b8ea8;box-sizing:border-box"></div>
<div class="a" style="left:464px;top:80px;width:18px;height:25px;background:#f5e0a0;border-left:2px solid #222;border-top:1px solid #222;box-sizing:border-box"></div>
<svg class="a" style="left:467px;top:86px" width="14" height="14"><path d="M3,6.500 L6,9.500 L11.500,4" fill="none" stroke="#707070" stroke-width="2.200"/></svg>
<div class="a" style="left:58.500px;top:106.500px;width:409px;height:497px;background:repeating-linear-gradient(180deg,#f6fdff 0,#f4fcff .500px,#d8f5fd 1.500px,#d8f5fd 1.900px,#f4fcff 2.900px,#f6fdff 3.200px)"></div>
<div class="a" style="left:467.500px;top:106.500px;width:14.500px;height:497px;background:#f1f1f1;border-left:1px solid #e4e4e4;box-sizing:border-box"></div>
<div class="a" style="left:468.500px;top:447px;width:11.500px;height:67px;border:1px solid #8f8f8f;border-radius:2px;background:linear-gradient(90deg,#f4f4f4,#dcdcdc 50%,#cfcfcf);box-sizing:border-box"></div>
<svg class="a" style="left:468px;top:108px" width="14" height="420"><path d="M4,10 L7,6.500 L10,10 Z" fill="#444"/><path d="M4,370.500 h5 M4,372.500 h5 M4,374.500 h5" stroke="#666" stroke-width=".8"/></svg>
<div class="a" style="left:482px;top:54px;width:1.500px;height:550px;background:#a0a0a0"></div>
<div class="a" style="left:483.500px;top:54px;width:2px;height:550px;background:#f6f6f6"></div>
<div class="a" style="left:485.500px;top:54px;width:1.200px;height:550px;background:#a8a8a8"></div>
<div class="a" style="left:486.700px;top:54px;width:2.300px;height:550px;background:#fbfbfb"></div>
<div class="a" style="left:57px;top:53.500px;width:426px;height:1px;background:#8a8a8a"></div>

<svg class="a" style="left:61px;top:58px" width="20" height="20" viewBox="0 0 20 20"><path d="M2,9 L10,4 L15,7 L7,13 Z" fill="#2f78d8" stroke="#1b4ea0" stroke-width=".7"/><path d="M3,12 L8,15 L15,10 L15,12.500 L8,17.500 L3,14.500 Z" fill="#5a9ae8" stroke="#1b4ea0" stroke-width=".6"/><path d="M8,12 L16,4 L18,6 L10,13.500 Z" fill="#f09040" stroke="#a05010" stroke-width=".5"/></svg>
<span class="t" style="left:80px;top:60px;color:#555;font-size:10.500px">准备</span>
<svg class="a" style="left:60px;top:82px" width="22" height="22" viewBox="0 0 22 22"><path d="M3,12 L11,6 L19,9 L19,14 L10,20 L3,17 Z" fill="#e4e4e4" stroke="#444" stroke-width=".8"/><path d="M5,12.500 L11,8 L17,10 L10,15 Z" fill="#f0d020" stroke="#907000" stroke-width=".6"/><path d="M12,2 L16,3 L11,12 L9,11 Z" fill="#e8c818" stroke="#403000" stroke-width=".7"/></svg>
<span class="t b" style="left:80px;top:85px;font-size:11.500px;text-decoration:underline">CAM</span>
<div class="hd" style="left:85px;top:114px;width:7px"></div>
<div class="cb" style="left:95px;top:109px"></div>
<svg class="a" style="left:109px;top:107px" width="13" height="14"><path d="M5,2 Q8,1.500 8,4 Q8,5.500 9.500,6 Q11.500,7 10.500,9.500 Q9.500,12 6.500,11.500 Q4,11 4.500,8.500 Q3,7.500 3,5 Q3,2.500 5,2 Z" fill="none" stroke="#1fc28e" stroke-width="1.400"/></svg>
<span class="t" style="left:123.500px;top:107px">Curve_010</span>
<div class="hd" style="left:85px;top:130px;width:7px"></div>
<div class="cb" style="left:95px;top:125px"></div>
<svg class="a" style="left:109px;top:123px" width="13" height="14"><path d="M5,2 Q8,1.500 8,4 Q8,5.500 9.500,6 Q11.500,7 10.500,9.500 Q9.500,12 6.500,11.500 Q4,11 4.500,8.500 Q3,7.500 3,5 Q3,2.500 5,2 Z" fill="none" stroke="#1fc28e" stroke-width="1.400"/></svg>
<span class="t" style="left:123.500px;top:123px">Curve_011</span>
<div class="hd" style="left:85px;top:146px;width:7px"></div>
<div class="cb" style="left:95px;top:141px"></div>
<svg class="a" style="left:109px;top:139px" width="13" height="14"><path d="M5,2 Q8,1.500 8,4 Q8,5.500 9.500,6 Q11.500,7 10.500,9.500 Q9.500,12 6.500,11.500 Q4,11 4.500,8.500 Q3,7.500 3,5 Q3,2.500 5,2 Z" fill="none" stroke="#1fc28e" stroke-width="1.400"/></svg>
<span class="t" style="left:123.500px;top:139px">Curve_015</span>
<div class="hd" style="left:85px;top:162px;width:7px"></div>
<div class="cb" style="left:95px;top:157px"></div>
<svg class="a" style="left:109px;top:155px" width="13" height="14"><path d="M5,2 Q8,1.500 8,4 Q8,5.500 9.500,6 Q11.500,7 10.500,9.500 Q9.500,12 6.500,11.500 Q4,11 4.500,8.500 Q3,7.500 3,5 Q3,2.500 5,2 Z" fill="none" stroke="#1fc28e" stroke-width="1.400"/></svg>
<span class="t" style="left:123.500px;top:155px">Curve_016</span>
<div class="hd" style="left:85px;top:178px;width:7px"></div>
<div class="cb" style="left:95px;top:173px"></div>
<svg class="a" style="left:109px;top:171px" width="13" height="14"><path d="M5,2 Q8,1.500 8,4 Q8,5.500 9.500,6 Q11.500,7 10.500,9.500 Q9.500,12 6.500,11.500 Q4,11 4.500,8.500 Q3,7.500 3,5 Q3,2.500 5,2 Z" fill="none" stroke="#1fc28e" stroke-width="1.400"/></svg>
<span class="t" style="left:123.500px;top:171px">Curve_018</span>
<div class="hd" style="left:85px;top:194px;width:7px"></div>
<div class="cb" style="left:95px;top:189px"></div>
<svg class="a" style="left:109px;top:187px" width="13" height="14"><path d="M5,2 Q8,1.500 8,4 Q8,5.500 9.500,6 Q11.500,7 10.500,9.500 Q9.500,12 6.500,11.500 Q4,11 4.500,8.500 Q3,7.500 3,5 Q3,2.500 5,2 Z" fill="none" stroke="#1fc28e" stroke-width="1.400"/></svg>
<span class="t" style="left:123.500px;top:187px">Curve_020</span>
<div class="hd" style="left:85px;top:210px;width:7px"></div>
<div class="cb" style="left:95px;top:205px"></div>
<svg class="a" style="left:109px;top:203px" width="13" height="14"><path d="M5,2 Q8,1.500 8,4 Q8,5.500 9.500,6 Q11.500,7 10.500,9.500 Q9.500,12 6.500,11.500 Q4,11 4.500,8.500 Q3,7.500 3,5 Q3,2.500 5,2 Z" fill="none" stroke="#1fc28e" stroke-width="1.400"/></svg>
<span class="t" style="left:123.500px;top:203px">Curve_021</span>
<div class="hd" style="left:85px;top:226px;width:7px"></div>
<div class="cb" style="left:95px;top:221px"></div>
<svg class="a" style="left:109px;top:219px" width="13" height="14"><path d="M5,2 Q8,1.500 8,4 Q8,5.500 9.500,6 Q11.500,7 10.500,9.500 Q9.500,12 6.500,11.500 Q4,11 4.500,8.500 Q3,7.500 3,5 Q3,2.500 5,2 Z" fill="none" stroke="#1fc28e" stroke-width="1.400"/></svg>
<span class="t" style="left:123.500px;top:219px">Curve_023</span>
<div class="hd" style="left:85px;top:242px;width:7px"></div>
<div class="cb" style="left:95px;top:237px"></div>
<svg class="a" style="left:109px;top:235px" width="13" height="14"><path d="M5,2 Q8,1.500 8,4 Q8,5.500 9.500,6 Q11.500,7 10.500,9.500 Q9.500,12 6.500,11.500 Q4,11 4.500,8.500 Q3,7.500 3,5 Q3,2.500 5,2 Z" fill="none" stroke="#1fc28e" stroke-width="1.400"/></svg>
<span class="t" style="left:123.500px;top:235px">Curve_024</span>
<div class="hd" style="left:85px;top:258px;width:7px"></div>
<div class="cb" style="left:95px;top:253px"></div>
<svg class="a" style="left:109px;top:251px" width="13" height="14"><path d="M7,2.500 Q3.500,3 3.500,6 Q4,8 6,8.500 Q5.500,10 7.500,11.500" fill="none" stroke="#e020d0" stroke-width="1.500" stroke-linecap="round"/></svg>
<span class="t" style="left:123.500px;top:251px">q1</span>
<div class="hd" style="left:85px;top:274px;width:7px"></div>
<div class="cb" style="left:95px;top:269px"></div>
<svg class="a" style="left:109px;top:267px" width="13" height="14"><path d="M7,2.500 Q3.500,3 3.500,6 Q4,8 6,8.500 Q5.500,10 7.500,11.500" fill="none" stroke="#e020d0" stroke-width="1.500" stroke-linecap="round"/></svg>
<span class="t" style="left:123.500px;top:267px">q2</span>
<div class="hd" style="left:85px;top:290px;width:7px"></div>
<div class="cb" style="left:95px;top:285px"></div>
<svg class="a" style="left:109px;top:283px" width="13" height="14"><path d="M5,2 Q8,1.500 8,4 Q8,5.500 9.500,6 Q11.500,7 10.500,9.500 Q9.500,12 6.500,11.500 Q4,11 4.500,8.500 Q3,7.500 3,5 Q3,2.500 5,2 Z" fill="none" stroke="#1fc28e" stroke-width="1.400"/></svg>
<span class="t" style="left:123.500px;top:283px">w1</span>
<div class="hd" style="left:85px;top:306px;width:7px"></div>
<div class="cb" style="left:95px;top:301px"></div>
<svg class="a" style="left:109px;top:299px" width="13" height="14"><path d="M5,2 Q8,1.500 8,4 Q8,5.500 9.500,6 Q11.500,7 10.500,9.500 Q9.500,12 6.500,11.500 Q4,11 4.500,8.500 Q3,7.500 3,5 Q3,2.500 5,2 Z" fill="none" stroke="#1fc28e" stroke-width="1.400"/></svg>
<span class="t" style="left:123.500px;top:299px">w2</span>
<div class="vd" style="left:68px;top:107px;height:371px"></div>
<div class="vd" style="left:84.500px;top:107px;height:199px"></div>
<div class="vd" style="left:84.500px;top:364px;height:92px"></div>
<svg width="0" height="0" class="a"><defs><linearGradient id="gk" x1="0" y1="0" x2="1" y2="1"><stop offset="0" stop-color="#6c6c6c"/><stop offset=".5" stop-color="#e6e6e6"/><stop offset="1" stop-color="#8a8a8a"/></linearGradient></defs></svg>
<div class="a" style="left:64px;top:323.5px;width:9px;height:9px;box-sizing:border-box;border:1px solid #8a8a8a;background:#fff"></div>
<div class="a" style="left:66px;top:327.5px;width:5px;height:1px;background:#000"></div>
<div class="a" style="left:68px;top:325.5px;width:1px;height:5px;background:#000"></div>
<div class="hd" style="left:73px;top:328px;width:5px"></div>
<div class="cb" style="left:79.500px;top:323px"></div>
<svg class="a" style="left:95px;top:316px" width="24" height="24" viewBox="0 0 22 24"><path d="M2,12 L10,3 L19,6 L19,15 L9,21 L2,18 Z" fill="url(#gk)" stroke="#333" stroke-width=".8"/><path d="M2,12 L9,14 L9,21 M9,14 L19,6" fill="none" stroke="#555" stroke-width=".6"/><g fill="#f02020"><circle cx="10" cy="3" r="1.400"/><circle cx="19" cy="6" r="1.400"/><circle cx="19" cy="15" r="1.400"/><circle cx="2" cy="18" r="1.400"/><circle cx="9" cy="21" r="1.400"/><circle cx="7" cy="11" r="1.400"/><circle cx="14" cy="17" r="1.400"/></g></svg>
<span class="t b" style="left:121px;top:321px;font-size:10.500px">点 (2)</span>
<div class="a" style="left:64px;top:350.0px;width:9px;height:9px;box-sizing:border-box;border:1px solid #8a8a8a;background:#fff"></div>
<div class="a" style="left:66px;top:354.0px;width:5px;height:1px;background:#000"></div>
<div class="hd" style="left:73px;top:354.5px;width:5px"></div>
<div class="cb" style="left:79.500px;top:349.500px"></div>
<svg class="a" style="left:95px;top:343px" width="24" height="24" viewBox="0 0 22 24"><g transform="translate(0,1)"><path d="M2,12 L10,3 L19,6 L19,15 L9,21 L2,18 Z" fill="url(#gk)" stroke="#333" stroke-width=".8"/><path d="M2,12 L9,14 L9,21 M9,14 L19,6" fill="none" stroke="#555" stroke-width=".6"/></g><rect x="5.500" y="1.500" width="15" height="16" fill="none" stroke="#f02020" stroke-width="1" stroke-dasharray="2 1.300"/></svg>
<span class="t b" style="left:121px;top:347.500px;font-size:10.500px">加工视角 (6)</span>
<div class="hd" style="left:85px;top:376.5px;width:7px"></div>
<div class="cb" style="left:95px;top:371.5px;border-color:#ee2a2a"></div>
<span class="t" style="left:110.500px;top:369.5px;color:#ee2a2a">View_000</span>
<div class="hd" style="left:85px;top:392.5px;width:7px"></div>
<div class="cb" style="left:95px;top:387.5px;border-color:#ee2a2a"></div>
<span class="t" style="left:110.500px;top:385.5px;color:#ee2a2a">View_003</span>
<div class="hd" style="left:85px;top:408.5px;width:7px"></div>
<div class="cb" style="left:95px;top:403.5px;border-color:#333"></div>
<span class="t" style="left:110.500px;top:401.5px;color:#000">View_001</span>
<div class="hd" style="left:85px;top:424.5px;width:7px"></div>
<div class="cb" style="left:95px;top:419.5px;border-color:#333"></div>
<span class="t" style="left:110.500px;top:417.5px;color:#000">View_002</span>
<div class="hd" style="left:85px;top:440.5px;width:7px"></div>
<div class="cb" style="left:95px;top:435.5px;border-color:#333"></div>
<span class="t" style="left:110.500px;top:433.5px;color:#000">View_004</span>
<div class="hd" style="left:85px;top:456.5px;width:7px"></div>
<div class="cb" style="left:95px;top:451.5px;border-color:#333"></div>
<span class="t" style="left:110.500px;top:449.5px;color:#000">View_005</span>
<div class="hd" style="left:68px;top:478px;width:9px"></div>
<div class="cb" style="left:79px;top:473px"></div>
<svg class="a" style="left:95px;top:466px" width="24" height="24" viewBox="0 0 22 24"><g transform="translate(0,2)"><path d="M2,12 L10,3 L19,6 L19,15 L9,21 L2,18 Z" fill="url(#gk)" stroke="#333" stroke-width=".8"/><path d="M2,12 L9,14 L9,21 M9,14 L19,6" fill="none" stroke="#555" stroke-width=".6"/></g><path d="M4,9 L13,2 L21,5 L12,12 Z" fill="#3f86e0" stroke="#1b4ea0" stroke-width=".7"/></svg>
<span class="t b" style="left:121px;top:471px;font-size:10.500px">切削模拟</span>
<div class="a" style="left:59px;top:497.500px;width:408px;height:21px;background:linear-gradient(180deg,#e2f1fa 0,#c3e0f3 45%,#7fbce3 80%,#62abd9 100%)"></div>
<svg class="a" style="left:60px;top:493px" width="24" height="26" viewBox="0 0 24 26"><path d="M3,15 L13,7 L21,10 L21,16 L11,24 L3,21 Z" fill="#ececec" stroke="#444" stroke-width=".8"/><path d="M4,16 L7,13.500 L9,15 L12,12.500 L10,11 L13,8.500 L19,11 L16,13.500 L14,12.500 L11,15 L13,16 L10,18.500 Z" fill="#f4e428" stroke="#8a7a00" stroke-width=".7"/><path d="M3,3 v12 M19,1 v9" stroke="#e04040" stroke-width=".8" stroke-dasharray="1.500 1"/></svg>
<span class="t b" style="left:88px;top:498.500px;font-size:10.500px">刀具路径 (36) - □□□: 2 h 49 min</span>
<div class="a" style="left:59px;top:535px;width:408px;height:15px;background:rgba(200,232,248,.55)"></div>
<div class="hd" style="left:68px;top:527px;width:7px"></div>
<svg class="a" style="left:75px;top:520px" width="14" height="14"><path d="M2,8 L7,3 L12,5 L12,9 L7,13 L2,11 Z" fill="#5b9be8" stroke="#234a90" stroke-width=".7"/><path d="M4,8 L7,5.500 L10,6.500 L7,9 Z" fill="#fff"/></svg>
<span class="t i" style="left:90px;top:520px">毛坯模型 - 初始化</span>
<span class="t i" style="left:250px;top:520px">C+</span>
<div class="hd" style="left:68px;top:543px;width:7px"></div>
<svg class="a" style="left:77px;top:535px" width="14" height="15"><path d="M6,1 h4 v8 h-4 z" fill="#4a8ae0" stroke="#1b3e90" stroke-width=".6"/><path d="M1,10 L6,8 L13,10 L13,13 L1,13 Z" fill="#7aa4e0" stroke="#1b3e90" stroke-width=".6"/></svg>
<span class="t b i" style="left:91px;top:535.500px;text-decoration:underline">fidia_d318[user]</span>
<div class="a" style="left:92px;top:551px;width:375px;height:15.500px;background:#a9a5a9"></div>
<div class="hd" style="left:68px;top:559px;width:9px"></div>
<div class="cb" style="left:79px;top:554px;background:#ffee10;border-color:#222"></div>
<svg class="a" style="left:79px;top:554px" width="9" height="10"><path d="M2,5 L4,7.500 L7.500,2.500" fill="none" stroke="#000" stroke-width="1.500"/></svg>
<div class="a" style="left:92px;top:551.5px;width:27px;height:15px;background:#fff;border:1px dotted #777;box-sizing:border-box"></div>
<div class="a" style="left:94px;top:554.5px;width:9px;height:9px;border-radius:50%;background:radial-gradient(circle at 35% 35%,#fff8a0,#d8c000)"></div>
<svg class="a" style="left:105px;top:551px" width="14" height="15"><path d="M6,1 h4 v8 h-4 z" fill="#4a8ae0" stroke="#1b3e90" stroke-width=".6"/><path d="M1,10 L6,8 L13,10 L13,13 L1,13 Z" fill="#7aa4e0" stroke="#1b3e90" stroke-width=".6"/></svg>
<span class="t b" style="left:120px;top:552px">1 - ISO 精加工</span>
<span class="t b" style="left:250px;top:552px">C+</span>
<span class="t b" style="left:264.5px;top:552px">P-</span>
<span class="t b" style="left:278.5px;top:552px">E+</span>
<span class="t b" style="left:320px;top:552px">H+</span>
<span class="t b" style="left:383.500px;top:552px">球刀 (8.00) 直柄刀</span>
<div class="hd" style="left:68px;top:575px;width:9px"></div>
<div class="cb" style="left:79px;top:570px;background:#ffee10;border-color:#222"></div>
<div class="a" style="left:94px;top:570.5px;width:9px;height:9px;border-radius:50%;background:radial-gradient(circle at 35% 35%,#a8ffa0,#10a020)"></div>
<svg class="a" style="left:105px;top:567px" width="14" height="15"><circle cx="7" cy="8" r="5.500" fill="#e83030" stroke="#901010" stroke-width=".6"/><path d="M5,3 h4 v7 h-4 z" fill="#4a8ae0" stroke="#1b3e90" stroke-width=".6"/></svg>
<span class="t" style="left:120px;top:568px">2 - ISO 精加工</span>
<span class="t" style="left:250px;top:568px">C+</span>
<span class="t" style="left:278.5px;top:568px">E+</span>
<span class="t" style="left:320px;top:568px">H+</span>
<span class="t" style="left:383.500px;top:568px">球刀 (8.00) 直柄刀</span>
<div class="hd" style="left:68px;top:591px;width:9px"></div>
<div class="cb" style="left:79px;top:586px;background:#ffee10;border-color:#222"></div>
<div class="a" style="left:94px;top:586.5px;width:9px;height:9px;border-radius:50%;background:radial-gradient(circle at 35% 35%,#a8ffa0,#10a020)"></div>
<svg class="a" style="left:105px;top:583px" width="14" height="15"><path d="M6,1 h4 v8 h-4 z" fill="#4a8ae0" stroke="#1b3e90" stroke-width=".6"/><path d="M1,10 L6,8 L13,10 L13,13 L1,13 Z" fill="#7aa4e0" stroke="#1b3e90" stroke-width=".6"/></svg>
<span class="t" style="left:120px;top:584px">4 - 3D 精加工</span>
<span class="t" style="left:250px;top:584px">C+</span>
<span class="t" style="left:320px;top:584px">H+</span>
<span class="t" style="left:383.500px;top:584px">球刀 (6.00) 直柄刀</span>
<div class="hd" style="left:68px;top:607px;width:9px"></div>
<div class="cb" style="left:79px;top:602px;background:#ffee10;border-color:#222"></div>
<div class="a" style="left:94px;top:602.5px;width:9px;height:9px;border-radius:50%;background:radial-gradient(circle at 35% 35%,#a8ffa0,#10a020)"></div>
<svg class="a" style="left:105px;top:599px" width="14" height="15"><path d="M6,1 h4 v8 h-4 z" fill="#4a8ae0" stroke="#1b3e90" stroke-width=".6"/><path d="M1,10 L6,8 L13,10 L13,13 L1,13 Z" fill="#7aa4e0" stroke="#1b3e90" stroke-width=".6"/></svg>
<span class="t" style="left:120px;top:600px">5 - 3D 精加工</span>
<span class="t" style="left:250px;top:600px">C+</span>
<span class="t" style="left:320px;top:600px">H+</span>
<span class="t" style="left:383.500px;top:600px">球刀 (6.00) 直柄刀</span>
</div>
<svg class="a" style="left:489px;top:53.5px" width="722" height="550.5" viewBox="489 53.5 722 550.5">
<defs>
<linearGradient id="gbg" x1="0" y1="0" x2="0" y2="1"><stop offset="0" stop-color="#666"/><stop offset="1" stop-color="#757575"/></linearGradient>
<linearGradient id="gblue" x1="0" y1="54" x2="0" y2="604" gradientUnits="userSpaceOnUse"><stop offset="0" stop-color="#2a5fc6"/><stop offset=".3" stop-color="#5a7fd6"/><stop offset=".6" stop-color="#90a4e8"/><stop offset=".85" stop-color="#b8c4f4"/><stop offset="1" stop-color="#ccd4fa"/></linearGradient>
<linearGradient id="gpin" x1="0" y1="0" x2="1" y2="0"><stop offset="0" stop-color="#2f4766"/><stop offset=".45" stop-color="#e8f0fa"/><stop offset=".6" stop-color="#7f9cc0"/><stop offset="1" stop-color="#3a5576"/></linearGradient>
</defs>
<rect x="489" y="53" width="722" height="552" fill="url(#gbg)"/>
<!-- blue wall right -->
<polygon points="1017.5,53 1211,53 1211,529 1146,592 1043,475.5 1013,440 1014,80" fill="url(#gblue)"/>
<polygon points="1135,604 1211,528.5 1211,604" fill="#f0f0f0"/>
<line x1="1043" y1="475.5" x2="1146" y2="592" stroke="#222" stroke-width=".8"/>
<!-- cyan machine head -->
<g stroke="#000" stroke-width=".8" stroke-linejoin="round">
<polygon points="598.5,92.8 641.3,106 640.5,119 619.7,122.2 592.3,151.6 594.8,259.5 580.5,264.4 581,225 585.5,197" fill="#00727a"/>
<path d="M560.1,53 L603.1,53 L585.5,197 L581,225 L580.5,264.4 L546,258.500 Q537,254 536.4,243 L539,225 Z" fill="#00a6a8"/>
<path d="M563.1,53 L542,225 L540,243 Q541,252 548,256.500" fill="none"/>
<path d="M570.6,53 L549,225 L548,238 Q550,247 580.500,252" fill="none"/>
<path d="M551,220.200 L582,230" fill="none"/>
<polygon points="586,53 731,53 679,81.6 603,57.5" fill="#00a6a8"/>
<polygon points="603,57.5 679,81.6 675.7,112.7 598.5,92.8" fill="#00a6a8"/>
<polygon points="679,81.6 729,54 726.7,82.4 675.7,112.7" fill="#006a72"/>
</g>
<path d="M598,53 Q640,70 668,66 Q690,62 691,53 Z" fill="#0000a8"/>
<!-- yellow cylinder -->
<g stroke="#000" stroke-width=".8" stroke-linejoin="round">
<polygon points="592.3,151.6 597.3,159.5 611,164.5 619.7,172.5 636.4,176.5 663.2,172 670.7,159.5 687,141 689.4,268.5 672,286 663.2,300.8 639.6,305.8 622,300.8 613.4,293.3 594.8,282" fill="#8c8c00"/>
<polygon points="592.3,151.6 597.3,159.5 600,286 594.8,282" fill="#9c9c00"/>
<polygon points="597.3,159.5 611,164.5 613.4,293.3 600,286" fill="#8a8a00"/>
<polygon points="611,164.5 619.7,172.5 622,300.8 613.4,293.3" fill="#a0a000"/>
<polygon points="619.7,172.5 636.4,176.5 639.6,305.8 622,300.8" fill="#a8a800"/>
<polygon points="636.4,176.5 663.2,172 663.2,300.8 639.6,305.8" fill="#868600"/>
<polygon points="663.2,172 670.7,159.5 672,286 663.2,300.8" fill="#969600"/>
<polygon points="670.7,159.5 687,141 689.4,268.5 672,286" fill="#a4a400"/>
<polyline points="678,150 679.5,276" fill="none"/>
<polyline points="683,145 684.5,272" fill="none"/>
<polygon points="592.3,151.6 619.7,122.2 633.4,117.7 645.8,121 660.7,120.5 678.2,124.7 683.2,131 687,141 670.7,159.5 663.2,172 636.4,176.5 619.7,172.5 611,164.5 597.3,159.5" fill="#a9a900"/>
<ellipse cx="681.5" cy="152.5" rx="3" ry="2" fill="#a9a900"/>
<ellipse cx="674.5" cy="160.5" rx="3" ry="2" fill="#a9a900"/>
</g>
<!-- red star scribble -->
<path d="M546,206 L576,197 L556,214 L561,193 L567,218 Z" fill="none" stroke="#e8101c" stroke-width="1.5" stroke-linejoin="round"/>
<!-- blue mold -->
<defs>
<linearGradient id="gm1" x1="0" y1="0" x2="1" y2="0"><stop offset="0" stop-color="#3f5c80"/><stop offset=".6" stop-color="#52749e"/><stop offset="1" stop-color="#41608a"/></linearGradient>
<linearGradient id="gm2" x1="0" y1="0" x2="1" y2="1"><stop offset="0" stop-color="#7da0cf"/><stop offset="1" stop-color="#4a6b94"/></linearGradient>
</defs>
<polygon points="489,361.8 627.8,360.5 632.8,357.9 719.5,264 743.7,265.3 750.4,234.8 760,243.5 766.3,224.4 779,224.8 824,234 828.5,236.500 868,280 878,356 840,355.8 833.2,382 824.1,400 771.4,481.2 489,486" fill="#47698f" stroke="#000" stroke-width=".8"/>
<polygon points="489,485.6 535.6,483.8 689,482.2 771.4,481.2 824.1,400 833.2,382 840,355.8 868,355.8 930,355 918,475 901,604 489,604" fill="#36506e"/>
<!-- shaded faces -->
<polygon points="489,361.8 627.8,360.5 636.5,368.4 489,371.9" fill="#3a5676"/>
<polygon points="489,371.9 636.5,368.4 630,377.500 616.4,386.6 598.2,394.6 586.8,396.9 559.500,402.6 545,395 523,407 489,411.7" fill="#3e5a7c"/>
<polygon points="627.8,360.5 632.8,357.9 719.5,264 724,270.500 640,363 636.5,368.4" fill="#3b5778"/>
<polygon points="489,453.8 557.3,442.4 602.8,429.4 623.2,420.8 634.6,410.500 642.500,424 621,451.500 568.6,459.5 489,472" fill="url(#gm1)"/>
<polygon points="489,472 568.6,459.5 621,451.500 625.500,453.8 627.8,463 625.500,472 489,476.5" fill="#3f5c80"/>
<polygon points="621,451.500 642.500,424 648,428.500 684.700,411 648.600,470.800 625.500,472 627.8,463 625.500,453.8" fill="#38547a"/>
<polygon points="489,476.5 619.8,472.6 689,470.8 762,470.800 771.4,481.2 689,482.2 535.6,483.8 489,485.6" fill="#415f84"/>
<polygon points="770.4,232 779,224.8 824,234 828.5,236.500 868,280 868,300 833.300,291.800 823.700,300.300 810.900,307.800 796,306.700 782.100,298.200 793.800,254.500" fill="#40608a"/>
<polygon points="766.3,224.4 770.4,232 761.800,279 756,290 759.700,243" fill="#44648e"/>
<polygon points="833.8,332.5 868,332.5 868,345.6 832.7,345.6" fill="#36506e"/><polygon points="832.7,345.6 868,345.6 868,355.8 840,355.8" fill="#3d5a7e"/>
<polygon points="731,312 741,300 752,297 746,310 736,322" fill="url(#gm2)"/>
<g fill="none" stroke="#000" stroke-width=".9" stroke-linejoin="round" stroke-linecap="round">
<polyline points="489,371.9 580,369.6 636.5,368.4 627.8,360.5"/>
<polyline points="636.5,368.4 640,363"/>
<polyline points="489,411.7 523,407 533.4,419.6 558.4,414 566.4,416.2 598.2,410.5 611.9,406 625.5,401.4"/>
<polyline points="559.500,402.6 586.8,396.9 598.2,394.6 616.4,386.6 630,377.500 636.5,368.4"/>
<polyline points="559.500,402.6 558.4,407 566.4,416.2"/>
<polyline points="489,425.3 534.5,419.6"/>
<polyline points="489,447 545.9,437.8 600.5,424.2 616.4,418.500 634.6,409.400"/>
<polyline points="489,453.8 557.3,442.4 602.8,429.4 623.2,420.8 638,414"/>
<polyline points="489,460.6 557.3,451.5 607.3,437.8 619.8,431"/>
<polyline points="489,472 568.6,459.5 621,451.5"/>
<polyline points="489,476.5 619.8,472.6 689,470.8 762,470.800 782.800,468.800"/>
<polyline points="528.8,475.4 535.6,483.8"/>
<polyline points="489,485.6 535.6,483.8 689,482.2 771.4,481.2 824.1,400 833.2,382 840,355.8 868,355.8"/>
<polyline points="762,470.800 771.4,481.2"/>
<!-- trapezoid block -->
<polygon points="523,407 534.500,378.700 543.600,378.700 557.3,393.500 558.400,407 538,412.500 533.4,419.6" fill="#415f84"/>
<polygon points="534.500,378.700 543.600,378.700 557.3,393.500 547,394.600" fill="#36506e"/>
<polyline points="547,394.600 538,412.500"/>
<polyline points="527,404 537,416 M530,397 541,410" stroke-width=".6"/>
<circle cx="550.500" cy="399.500" r="2.200"/>
<!-- verticals between curves -->
<polyline points="586.8,396.9 596,406 600.5,410.5 599.4,424.2 605,437.8 613,451.5 619.8,472"/>
<polyline points="598.2,394.6 611.9,406"/>
<polyline points="608,390.500 618,403"/>
<polyline points="616.4,386.6 625.500,398.500"/>
<polyline points="630,377.500 640,391 646,397"/>
<polyline points="611.9,406 621,417.4"/>
<polyline points="625.500,401.400 634.6,409.400"/>
<!-- wall diag -->
<polyline points="640,363 724,270.500 742,272.500"/>
<polyline points="644,372 728,278 740,280"/>
<polyline points="648.400,380.600 733.800,285.400"/>
<polyline points="657,392 738,296"/>
<circle cx="662.700" cy="370.700" r="2"/>
<rect x="725" y="300" width="3" height="3"/>
<polyline points="719.5,264 724,270.500"/>
<polyline points="743.7,265.3 742,272.500 736.300,281.100 741,289 762,282.500"/>
<polyline points="736.300,281.100 733.800,285.400"/>
<polyline points="741,289 738,296 752,297 771,303"/>
<polyline points="750.4,234.8 759.700,243"/>
<polyline points="766.3,224.4 770.4,232 761.800,279 758,290 745,318" stroke-width="1.400"/>
<polyline points="773.600,234 764,282.500 752,310"/>
<polyline points="770.4,232 793.800,254.500 782.100,298.200"/>
<polyline points="789.600,251.300 778.900,293.900"/>
<polyline points="828.5,236.500 793.800,254.500"/>
<path d="M782.100,298.200 Q790,306 803,308 Q820,306 832.200,290.700" stroke-width="1.300"/>
<path d="M778.900,293.900 Q770,297 762,282.500"/>
<polyline points="832.200,290.700 833.300,315.200"/>
<polyline points="836.5,292.800 836.5,315 833.8,332.5 832.7,346.7 840,355.8"/><polyline points="832.7,345.6 868,345.6"/><polyline points="862.8,332.5 862.8,345"/>
<polyline points="828,296 829,312"/>
<polyline points="868,280 836.5,292.800"/>
</g>
<!-- toolpath strip -->
<polygon points="635.7,413 650.7,401.1 664.4,390 678,377.2 691.7,362.7 705.4,347.3 717.3,336.7 727.9,339.1 722.4,349.9 712.2,362.7 700.2,375.5 686.6,389.1 671.2,402 655.9,413 642.5,423.3" fill="#e8ff08"/>
<polyline points="634,413.500 650,400.500 664,389 677.500,376.200 691,361.700 705,346.300 717,335.500 731,317" fill="none" stroke="#c020c0" stroke-width=".9"/>
<g fill="none" stroke="#000" stroke-width=".9" stroke-linejoin="round" stroke-linecap="round">
<polyline points="643,424.500 656.500,414 672,403 687.500,390 701,376.500 713,363.500 723.500,350.500 733,334 741,318"/>
<polyline points="648,428.500 660,419.500 690,396 716,368 730,350 745,322" stroke="#dfe8f4" stroke-width=".7"/>
<polyline points="649.500,430 662,421 692,397.500 718,369.500 732,351.500 748,323"/>
<!-- faces right of strip -->
<polyline points="716,368 726,378"/>
<polyline points="701,387 711,394.500 726,378 748,396 760,389 785,352 808,316"/>
<polyline points="748,396 742,420"/>
<polyline points="711,394.500 716,410"/>
<polyline points="734,386 768,345 790,311 800,296"/>
<polyline points="740,391 775,348 797,313"/>
<polyline points="760,389 772,384 795,350 815,318 826,300"/>
<polyline points="736,413 762,411 772,413 800,372"/>
<polyline points="772,413 782,400 747.700,433.700 735.300,446 762,470.800"/>
<polyline points="747.700,433.700 782.800,468.800"/>
<polyline points="817.3,364.4 747.700,433.700"/>
<polyline points="782,400 804.8,365.5 821.9,339.3 826,333"/><polyline points="817.3,364.4 833.2,382"/>
<polyline points="735.300,446 709.500,439.900"/>
<polyline points="735.300,446 700,471"/>
<polyline points="746,456 722,471"/>
<polyline points="752,462 733,471"/>
<path d="M776,397 L782,402 M780,391 L786,396 M770,405 L776,410" stroke-width=".7"/>
<ellipse cx="755" cy="436.500" rx="2" ry="3.500" transform="rotate(-35 755 436.500)"/>
<!-- pocket left of pin -->
<polyline points="681.600,408.900 648,428.500 630,448 627.8,463"/>
<polyline points="684.700,411 648.600,470.800"/>
<polyline points="633,455 636,471 M640,452 642,471 M646,448 647,471" stroke-width=".8"/>
</g>
<!-- pin -->
<polygon points="684.700,411 698,416 661,471.900 648.600,470.800" fill="#34507a" stroke="#000" stroke-width=".7"/>
<polygon points="689.500,413.300 692.500,414.500 653,471.200 650.500,471" fill="#f4f8fd"/>
<polygon points="692.500,414.500 696,415.700 657,471.500 653,471.200" fill="#6f8fb8"/>
<path d="M698,416 L716,412 Q734,408 733.200,415 Q729,428 709.500,439.900 Q685,458 663,471.900 L661,471.900 Z" fill="#3f5e88" stroke="#000" stroke-width=".7"/>
<path d="M729,413 Q724,428 707,439 Q684,456 664,470.500" fill="none" stroke="#dfe9f6" stroke-width="1.500"/>
<path d="M717,409.500 Q736,406 736,414 Q732,430 711,442" fill="none" stroke="#000" stroke-width=".7"/>
<ellipse cx="701.200" cy="406.800" rx="15.500" ry="6" fill="#3b5880" stroke="#000" stroke-width=".8"/>
<ellipse cx="701.200" cy="405.500" rx="13.500" ry="4.800" fill="#44648e" stroke="#000" stroke-width=".6"/>
<!-- red dashed lines -->
<line x1="635" y1="340" x2="634.5" y2="412" stroke="#e02020" stroke-width=".8" stroke-dasharray="5 2 1 2"/>
<line x1="641" y1="340" x2="641.5" y2="418" stroke="#e02020" stroke-width=".8" stroke-dasharray="5 3"/>
<circle cx="640" cy="332.5" r="1.6" fill="none" stroke="#ddd" stroke-width=".8"/>
<!-- dark/gray boundary bottom right -->
<line x1="918" y1="475" x2="901" y2="604" stroke="#111" stroke-width=".9"/>
<!-- tooltip -->
<rect x="640" y="317.5" width="232" height="15" fill="#000"/>
<text x="642" y="329" font-family="Liberation Sans,sans-serif" font-weight="bold" font-size="10.5" fill="#ffef30" textLength="226" lengthAdjust="spacingAndGlyphs">Point 21212 ( X482.803 Y187.345 Z-243.327 ) G00</text>
<!-- upper axis -->
<g font-family="Liberation Sans,sans-serif">
<line x1="501.5" y1="274" x2="505" y2="243" stroke="#0000e8" stroke-width="1.3"/>
<line x1="501.5" y1="274.500" x2="535" y2="274.500" stroke="#e80000" stroke-width="1.3"/>
<line x1="501.5" y1="274" x2="490" y2="263" stroke="#00b000" stroke-width="1.3"/>
<circle cx="500.5" cy="277" r="7.5" fill="#e8e8e8"/>
<path d="M500.500,277 L500.500,269.500 A7.500,7.500 0 0 0 493,277 Z" fill="#222"/>
<path d="M500.500,277 L500.500,284.500 A7.500,7.500 0 0 0 508,277 Z" fill="#222"/>
<circle cx="499" cy="273" r="1.3" fill="#00c000"/>
<text x="507" y="238" font-size="11" fill="#1010f0">Z</text>
<text x="518" y="271.500" font-size="11" fill="#2a2a2a" textLength="127" lengthAdjust="spacingAndGlyphs">Context : fidia_d318[user]</text>
<text x="534.500" y="272" font-size="12" fill="#e80000">X</text>
<!-- lower axis -->
<polygon points="539.7,542.6 532.3,553.3 538.5,556.5" fill="#cfcfcf"/>
<polygon points="539.7,542.6 538.5,556.5 553.4,556.5" fill="#f4f4f4"/>
<line x1="538.500" y1="555.500" x2="542" y2="524" stroke="#0000e8" stroke-width="1.3"/>
<line x1="538.500" y1="556.500" x2="572" y2="556.500" stroke="#e80000" stroke-width="1.3"/>
<line x1="538.500" y1="556" x2="526" y2="544" stroke="#00c000" stroke-width="1.3"/>
<text x="541.500" y="516.500" font-size="11.500" fill="#1010f0">Z</text>
<text x="524" y="538.500" font-size="11.500" fill="#00b000">Y</text>
<text x="574.500" y="554.500" font-size="12" fill="#e80000">X</text>
<text x="515" y="577.500" font-size="11" fill="#111" textLength="126" lengthAdjust="spacingAndGlyphs">Context : fidia_d318[user]</text>
<text x="576.500" y="593.500" font-size="11" fill="#111" textLength="44" lengthAdjust="spacingAndGlyphs">200(mm)</text>
<polyline points="497,593 497,597.500 575,597.500 575,593" fill="none" stroke="#000" stroke-width="1"/>
<line x1="536" y1="594.500" x2="536" y2="597.500" stroke="#000"/>
</g>
<!-- corner icon -->
<g transform="translate(1184,567)">
<rect x="2" y="2" width="11" height="14" rx="1.500" fill="#9fc0e8" stroke="#6d90c0" stroke-width=".8"/>
<path d="M4,6 l1.500,1.500 l2,-3 M4,10 l1.500,1.500 l2,-3" stroke="#e04010" stroke-width="1" fill="none"/>
<path d="M5,20 L9,14 L12,16 L14,11 L17,13 L19,9 L23,11 L16,23 L12,21 L10,25 Z" fill="#f0e020" stroke="#a09000" stroke-width=".8"/>
<path d="M20,12 L24,13 L21,19 L25,19 L17,28 L19,21 L16,21 Z" fill="#f07010" stroke="#c04000" stroke-width=".5"/>
</g>
</svg>
<style>
#dlg{position:absolute;left:868px;top:65px;width:323px;height:410px;border-radius:6px;box-shadow:0 0 0 1px rgba(30,40,60,.75),0 1px 6px 2px rgba(0,0,0,.45);
background:linear-gradient(90deg,#8e9298 0,#90949a 138px,#5f8bd6 160px,#6a95dc 250px,#6390da 323px);overflow:hidden;}
#dlg:before{content:"";position:absolute;left:0;top:0;right:0;bottom:0;border-radius:6px;box-shadow:inset 0 0 0 1px rgba(255,255,255,.55);}
#dlgL{position:absolute;left:0;top:213px;width:6px;height:197px;background:linear-gradient(90deg,#7f98bc 0,#4d6c94 30%,#48668e 70%,#8aa0c0 100%);}
#dlgB{position:absolute;left:0;top:404px;width:323px;height:6px;background:linear-gradient(90deg,#4a6890 0,#4f6c94 46px,#9a9ea6 56px,#a2a5ab 170px,#b9c5f0 180px,#c2ccf4 323px);}
#dlgR{position:absolute;left:317px;top:23px;width:6px;height:387px;background:linear-gradient(180deg,#6a95dc,#b6c2f0);}
#dc{position:absolute;left:5.5px;top:23px;width:312.5px;height:381px;background:#f0f0f0;box-shadow:0 0 0 1px rgba(40,50,70,.7);}
#dc .t{font-size:10.5px;}
.fld{position:absolute;box-sizing:border-box;border:1px solid #abadb3;background:#fff;}
.fld.dis{background:#e1e1e1;border-color:#b5b5b5;}
.fld.ro{background:#ebebeb;border-color:#9fb2cc;color:#8a8a8a;}
.btn{position:absolute;box-sizing:border-box;border:1px solid #707070;border-radius:3px;background:linear-gradient(180deg,#f4f4f4 0,#ececec 48%,#dedede 52%,#d0d0d0 100%);box-shadow:inset 0 0 0 1px rgba(255,255,255,.8);}
.grp{position:absolute;box-sizing:border-box;border:1px solid #d5dfe5;border-radius:3px;}
.dd{position:absolute;box-sizing:border-box;border:1px solid #707070;background:linear-gradient(180deg,#f2f2f2,#cfcfcf);}
.dd:after{content:"";position:absolute;left:50%;top:50%;margin:-2px 0 0 -4px;border:4px solid transparent;border-top:5px solid #000;border-bottom:0;}
.rad{position:absolute;width:9px;height:9px;border-radius:50%;border:1px solid #8a8f98;background:radial-gradient(#fff 30%,#d8dde4);box-sizing:border-box;}
</style>
<div id="dlg">
<div id="dlgL"></div><div id="dlgR"></div><div id="dlgB"></div>
<span class="t" style="left:6px;top:5px;font-size:10.5px;text-shadow:0 0 6px #fff,0 0 6px #fff,0 0 3px #fff">刀具路径 1 渐进式显示 (mm/分钟 模式)</span>
<div id="dc">
<!-- coordinates inside dc: page x-873, page y-88 -->
<span class="t" style="left:4px;top:4.3px">N?:</span>
<div class="fld dis" style="left:21px;top:2px;width:47px;height:19px"></div><span class="t" style="left:25px;top:4.3px">1</span>
<div class="fld" style="left:70px;top:2px;width:241px;height:19px"></div><span class="t" style="left:76px;top:4.3px">&lt; 渐进式显示 &gt;</span>
<div class="dd" style="left:296px;top:3px;width:14px;height:17px"></div>
<!-- transport buttons -->
<div class="btn" style="left:3px;top:24px;width:23px;height:22px"></div>
<div class="btn" style="left:30px;top:24px;width:23px;height:22px"></div>
<div class="btn" style="left:56px;top:24px;width:23px;height:22px"></div>
<div class="btn" style="left:83px;top:24px;width:147px;height:22px"></div>
<div class="btn" style="left:234px;top:24px;width:23px;height:22px"></div>
<div class="btn" style="left:260px;top:24px;width:23px;height:22px"></div>
<div class="btn" style="left:287px;top:24px;width:23px;height:22px"></div>
<svg class="a" style="left:0;top:24px" width="313" height="22" viewBox="0 0 313 22">
<g fill="#2a6fe0" stroke="#1648a8" stroke-width=".8" stroke-linejoin="round">
<path d="M9,6.500 h2 v9 h-2 z M18.500,6.500 l-6.500,4.500 l6.500,4.500 z"/>
<path d="M35,6.500 h12 v7 h-3 v-4.500 h-6 v4.500 h-3 z M39,10 l6,3.500 l-6,3.500 z"/>
<rect x="63" y="10" width="9" height="3"/>
<path d="M153,6 l8,5 l-8,5 z"/>
<path d="M244,6.500 h3 v3 h3 v3 h-3 v3 h-3 v-3 h-3 v-3 h3 z"/>
<path d="M267,6.500 h2 v9 h-2 z M270.500,7 l6.500,4 l-6.500,4 z"/>
<path d="M293.500,6.500 l6.500,4.500 l-6.500,4.500 z M301,6.500 h2 v9 h-2 z"/>
</g></svg>
<!-- group: position -->
<div class="grp" style="left:3px;top:58px;width:308px;height:60px"></div>
<span class="t" style="left:10px;top:48.2px;background:#f0f0f0;padding:0 2px">位置</span>
<span class="t b" style="left:74px;top:64.5px;font-size:10.5px;transform:scaleX(1.08)">X 482.803 Y 187.345 Z -243.327</span>
<div class="rad" style="left:4px;top:85px"></div><div class="a" style="left:7px;top:88px;width:3px;height:3px;border-radius:50%;background:#224a9a"></div>
<span class="t" style="left:17px;top:83px">毫米</span>
<div class="rad" style="left:44px;top:85px"></div>
<span class="t" style="left:59px;top:83px">点</span>
<div class="fld" style="left:74px;top:81px;width:65px;height:18px"></div><span class="t" style="left:78px;top:83px">34278.91</span>
<span class="t b" style="left:206px;top:83px;font-size:10.5px;transform:scaleX(.96)">G00速度</span>
<div class="a" style="left:4px;top:102px;width:268px;height:3px;background:#000"></div>
<div class="a" style="left:4px;top:105px;width:268px;height:2px;background:#d6d6d6"></div>
<div class="a" style="left:271px;top:100px;width:8px;height:15px;border:1px solid #8a8a8a;border-radius:2px;background:linear-gradient(90deg,#f6f6f6,#d9d9d9);box-sizing:border-box"></div>
<div class="btn" style="left:283px;top:101px;width:25px;height:16px"></div>
<svg class="a" style="left:283px;top:101px" width="25" height="16"><path d="M4.500,3.500 v9 M20.500,3.500 v9 M6,8 h13 M9,5 l-3,3 l3,3 M16,5 l3,3 l-3,3" fill="none" stroke="#1d5bc8" stroke-width="1.500"/></svg>
<!-- group: cutting speed -->
<div class="grp" style="left:3px;top:128px;width:308px;height:52px;border-bottom:0"></div>
<span class="t" style="left:10px;top:120.2px;background:#f0f0f0;padding:0 2px">切削速度</span>
<div class="a" style="left:4px;top:139px;width:260px;height:3px;background:#d2d2d2;border-top:1px solid #b4b4b4;box-sizing:border-box"></div>
<div class="a" style="left:42px;top:138px;width:13px;height:3px;background:#000"></div>
<div class="a" style="left:237px;top:137px;width:8px;height:15px;border:1px solid #8a8a8a;border-radius:2px;background:linear-gradient(90deg,#f6f6f6,#d9d9d9);box-sizing:border-box"></div>
<div class="fld" style="left:265px;top:136px;width:44px;height:18px"></div><span class="t" style="left:269px;top:138px">5040</span>
<div class="a" style="left:3px;top:159px;width:306px;height:9px;box-sizing:border-box;border:1px solid #8e8e8e;border-radius:3px;background:linear-gradient(180deg,#f0f0f0,#d4d4d4)"></div>
<div class="a" style="left:3px;top:172px;width:306px;height:9px;box-sizing:border-box;border:1px solid #3c7fb1;border-radius:3px;background:linear-gradient(180deg,#c4e6f8 0,#7cc4ee 45%,#45a3e0 55%,#6dbbea 100%)"></div>
<svg class="a" style="left:0;top:158px" width="313" height="24"><path d="M153,4 h7 l-3.500,3.500 z" fill="#777"/><path d="M153,20 h7 l-3.500,-3.500 z" fill="#eee" stroke="#888" stroke-width=".5"/></svg>
<!-- group: machine angle -->
<div class="grp" style="left:3px;top:193px;width:308px;height:28px"></div>
<span class="t" style="left:10px;top:184.2px;background:#f0f0f0;padding:0 2px">机床角度</span>
<span class="t" style="left:5px;top:203px">A :</span><div class="fld dis" style="left:21px;top:201px;width:84px;height:18px"></div><span class="t" style="left:24px;top:203px">0.000</span>
<span class="t" style="left:107px;top:203px">B :</span><div class="fld dis" style="left:122px;top:201px;width:84px;height:18px"></div><span class="t" style="left:125px;top:203px">-18.000</span>
<span class="t" style="left:209px;top:203px">C :</span><div class="fld dis" style="left:223px;top:201px;width:86px;height:18px"></div><span class="t" style="left:227px;top:203px">45.000</span>
<!-- group: start angle -->
<div class="grp" style="left:3px;top:231px;width:308px;height:66px"></div>
<span class="t" style="left:10px;top:222.2px;background:#f0f0f0;padding:0 2px">加工起始角度</span>
<span class="t" style="left:5px;top:241px">起始角度:</span>
<div class="fld" style="left:50px;top:239px;width:259px;height:18px"></div><span class="t" style="left:53px;top:241px;word-spacing:.5px">A(0.000)&nbsp; B(-18.000)&nbsp; C(45.000)</span>
<div class="dd" style="left:295px;top:240px;width:13px;height:16px"></div>
<span class="t" style="left:5px;top:262px">A :</span><div class="fld ro" style="left:21px;top:260px;width:84px;height:17px"></div><span class="t" style="left:24px;top:262px;color:#8c8c8c">0.000</span>
<span class="t" style="left:107px;top:262px">B :</span><div class="fld ro" style="left:122px;top:260px;width:84px;height:17px"></div><span class="t" style="left:125px;top:262px;color:#8c8c8c">-18.000</span>
<span class="t" style="left:209px;top:262px">C :</span><div class="fld ro" style="left:223px;top:260px;width:86px;height:17px"></div><span class="t" style="left:227px;top:262px;color:#8c8c8c">45.000</span>
<div class="btn" style="left:6px;top:281px;width:149px;height:14px"></div><span class="t" style="left:61px;top:281px">更新路径</span>
<div class="btn" style="left:158px;top:281px;width:150px;height:14px"></div><span class="t" style="left:199px;top:281px">更新并写入角度</span>
<!-- start / end -->
<div class="grp" style="left:3px;top:308px;width:153px;height:47.5px"></div>
<div class="grp" style="left:159px;top:308px;width:152px;height:47.5px"></div>
<span class="t" style="left:10px;top:300.2px;background:#f0f0f0;padding:0 2px">起点 [1-21212]</span>
<span class="t" style="left:165px;top:300.2px;background:#f0f0f0;padding:0 2px">终点 [1-21212]</span>
<span class="t" style="left:5px;top:318px">点 :</span><div class="fld" style="left:67px;top:316px;width:85px;height:18px"></div><span class="t" style="left:72px;top:318px">1</span>
<span class="t" style="left:162px;top:318px">点 :</span><div class="fld" style="left:222px;top:316px;width:85px;height:18px"></div><span class="t" style="left:226px;top:318px">21212</span>
<svg class="a" style="left:0;top:316px" width="313" height="18"><g fill="#f4f4f4" stroke="#b0b0b0" stroke-width=".8"><rect x="139.500" y="2.500" width="11" height="6"/><rect x="139.500" y="9.500" width="11" height="6"/><rect x="294.500" y="2.500" width="11" height="6"/><rect x="294.500" y="9.500" width="11" height="6"/></g><path d="M142.500,7 h5 l-2.500,-3 z M297.500,7 h5 l-2.500,-3 z" fill="#9a9a9a"/><path d="M142.500,11 h5 l-2.500,3 z" fill="#9a9a9a"/><path d="M297.500,11 h5 l-2.500,3 z" fill="#3a5fc0"/></svg>
<div class="btn" style="left:6px;top:337px;width:121px;height:15px"></div><span class="t" style="left:56px;top:337.5px">删除</span>
<div class="btn" style="left:130px;top:337px;width:22px;height:15px"></div>
<div class="btn" style="left:161px;top:337px;width:120px;height:15px"></div><span class="t" style="left:210px;top:337.5px">删除</span>
<div class="btn" style="left:284px;top:337px;width:23px;height:15px"></div>
<svg class="a" style="left:0;top:337px" width="313" height="14"><circle cx="137" cy="5" r="3.300" fill="#20b030" stroke="#0a6a18" stroke-width=".6"/><path d="M141,3 v9 l2,-2 l1.500,3 l1.500,-.8 l-1.500,-3 h3 z" fill="#111"/><circle cx="291" cy="5" r="3.300" fill="#e02020" stroke="#801010" stroke-width=".6"/><path d="M295,3 v9 l2,-2 l1.500,3 l1.500,-.8 l-1.500,-3 h3 z" fill="#111"/></svg>
<div class="btn" style="left:247px;top:358px;width:63px;height:21px"></div><span class="t" style="left:268px;top:362px">关闭</span>
<!-- red annotation scribbles -->
<svg class="a" style="left:0;top:225px" width="313" height="80" viewBox="873 313 313 80"><g fill="none" stroke="#ee1c24" stroke-width="1.300" stroke-linecap="round">
<path d="M925,325 Q960,321 1010,323 Q1062,324 1074,331 Q1080,340 1074,349 Q1040,353 985,350 Q940,350 922,347"/>
<path d="M906,367 Q890,368 889,375 Q892,384 930,386 Q985,388 1015,383 Q1026,377 1020,371 Q1000,364 950,365 Q915,365 898,368"/>
<path d="M1068,368 Q1056,370 1056,376 Q1060,385 1100,386 Q1145,386 1153,379 Q1155,371 1140,367 Q1100,364 1062,370"/>
</g></svg>
</div>
</div>
</div>
<div id="cap"><span class="a" style="left:22px;top:28px;white-space:nowrap;color:#fff;font-size:25.500px;line-height:36px;font-family:'Liberation Serif','Noto Serif CJK SC',serif">变换第一条程序机床头，<span style="font-family:'Liberation Sans','Noto Sans CJK SC',sans-serif;font-size:24px;display:inline-block;transform:scaleX(.9);transform-origin:0 50%;margin-right:-4px">BC</span>轴旋转<span style="font-family:'Liberation Sans','Noto Sans CJK SC',sans-serif;font-size:24px;display:inline-block;transform:scaleX(.9);transform-origin:0 50%;margin-right:-4px">180</span>度</span></div>
</body></html>
